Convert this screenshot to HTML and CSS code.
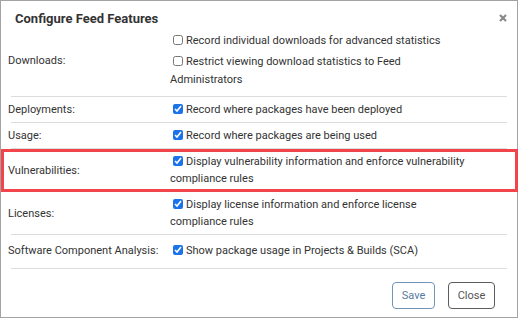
FILE: index.html
```html
<!DOCTYPE html>
<html lang="en">
<head>
  <meta charset="UTF-8" />
  <title>Configure Feed Features</title>
  <link rel="stylesheet" href="styles.css">
</head>
<body>
  <!-- Dialog -->
  <div class="dialog">
    <div class="dialog-header">
      <h1>Configure Feed Features</h1>
      <span class="close-x" title="Close">
        <svg width="8" height="8" viewBox="0 0 8 8"><path d="M1 1 L7 7 M7 1 L1 7" stroke="#8a8a8a" stroke-width="2.2" /></svg>
      </span>
    </div>

    <div class="features">
      <div class="feature-row downloads">
        <div class="feature-label">Downloads:</div>
        <div class="feature-value">
          <label class="option"><input type="checkbox" />Record individual downloads for advanced statistics</label>
          <label class="option"><input type="checkbox" />Restrict viewing download statistics to Feed Administrators</label>
        </div>
      </div>
      <div class="feature-row">
        <div class="feature-label">Deployments:</div>
        <div class="feature-value">
          <label class="option"><input type="checkbox" checked />Record where packages have been deployed</label>
        </div>
      </div>
      <div class="feature-row">
        <div class="feature-label">Usage:</div>
        <div class="feature-value">
          <label class="option"><input type="checkbox" checked />Record where packages are being used</label>
        </div>
      </div>
      <div class="feature-row highlight">
        <div class="feature-label">Vulnerabilities:</div>
        <div class="feature-value">
          <label class="option"><input type="checkbox" checked />Display vulnerability information and enforce vulnerability compliance rules</label>
        </div>
      </div>
      <div class="feature-row">
        <div class="feature-label">Licenses:</div>
        <div class="feature-value">
          <label class="option"><input type="checkbox" checked />Display license information and enforce license compliance rules</label>
        </div>
      </div>
      <div class="feature-row sca">
        <div class="feature-label">Software Component Analysis:</div>
        <div class="feature-value">
          <label class="option"><input type="checkbox" checked />Show package usage in Projects &amp; Builds (SCA)</label>
        </div>
      </div>
    </div>

    <div class="dialog-buttons">
      <button class="btn btn-save">Save</button>
      <button class="btn btn-close">Close</button>
    </div>
  </div>
</body>
</html>
```
FILE: styles.css
```css
* {
  margin: 0;
  padding: 0;
  box-sizing: border-box;
}
body {
  background-color: #ffffff;
  color: #333333;
  font-family: Roboto, "Liberation Sans", sans-serif;
  font-size: 11px;
}
.dialog {
  width: 518px;
  height: 318px;
  border: 1px solid #a3a3a3;
  background-color: #ffffff;
}
/* Header */
.dialog-header {
  display: flex;
  justify-content: space-between;
  align-items: flex-start;
  height: 28px;
  padding: 9px 10px 0 14px;
}
.dialog-header h1 {
  font-size: 13px;
  line-height: 17px;
  font-weight: bold;
  color: #333333;
}
.close-x {
  display: flex;
  margin-top: 4px;
}
/* Feature rows */
.features {
  margin: 0 10px;
}
.feature-row {
  display: grid;
  grid-template-columns: 159px 302px;
  align-items: center;
  padding: 4px 0;
  border-bottom: 1px solid #dddddd;
  position: relative;
}
.feature-row.downloads {
  padding: 3px 0 7px 0;
}
.feature-row.sca {
  padding: 7px 0 9px 0;
}
.feature-label {
  margin-left: -3px;
  line-height: 17px;
}
.feature-value {
  display: flex;
  flex-direction: column;
  gap: 3px;
}
.option {
  line-height: 17px;
}
.downloads .option {
  line-height: 18px;
}
.option input {
  width: 10px;
  height: 10px;
  margin: 0 3px 0 3px;
  vertical-align: -1px;
  accent-color: #1a73e8;
}
/* Red highlight round the vulnerabilities row */
.feature-row.highlight::after {
  content: "";
  position: absolute;
  top: 0;
  bottom: -1px;
  left: -10px;
  right: -11px;
  border: 3px solid #f2454b;
}
/* Buttons */
.dialog-buttons {
  display: flex;
  justify-content: flex-end;
  gap: 13px;
  padding: 13px 22px 0 0;
}
.btn {
  height: 27px;
  background-color: #ffffff;
  border-radius: 4px;
  font-family: Roboto, "Liberation Sans", sans-serif;
  font-size: 11px;
}
.btn-save {
  width: 43px;
  border: 1px solid #7394b8;
  color: #557aa1;
}
.btn-close {
  width: 47px;
  border: 1px solid #5c5c5c;
  color: #555555;
}
```
